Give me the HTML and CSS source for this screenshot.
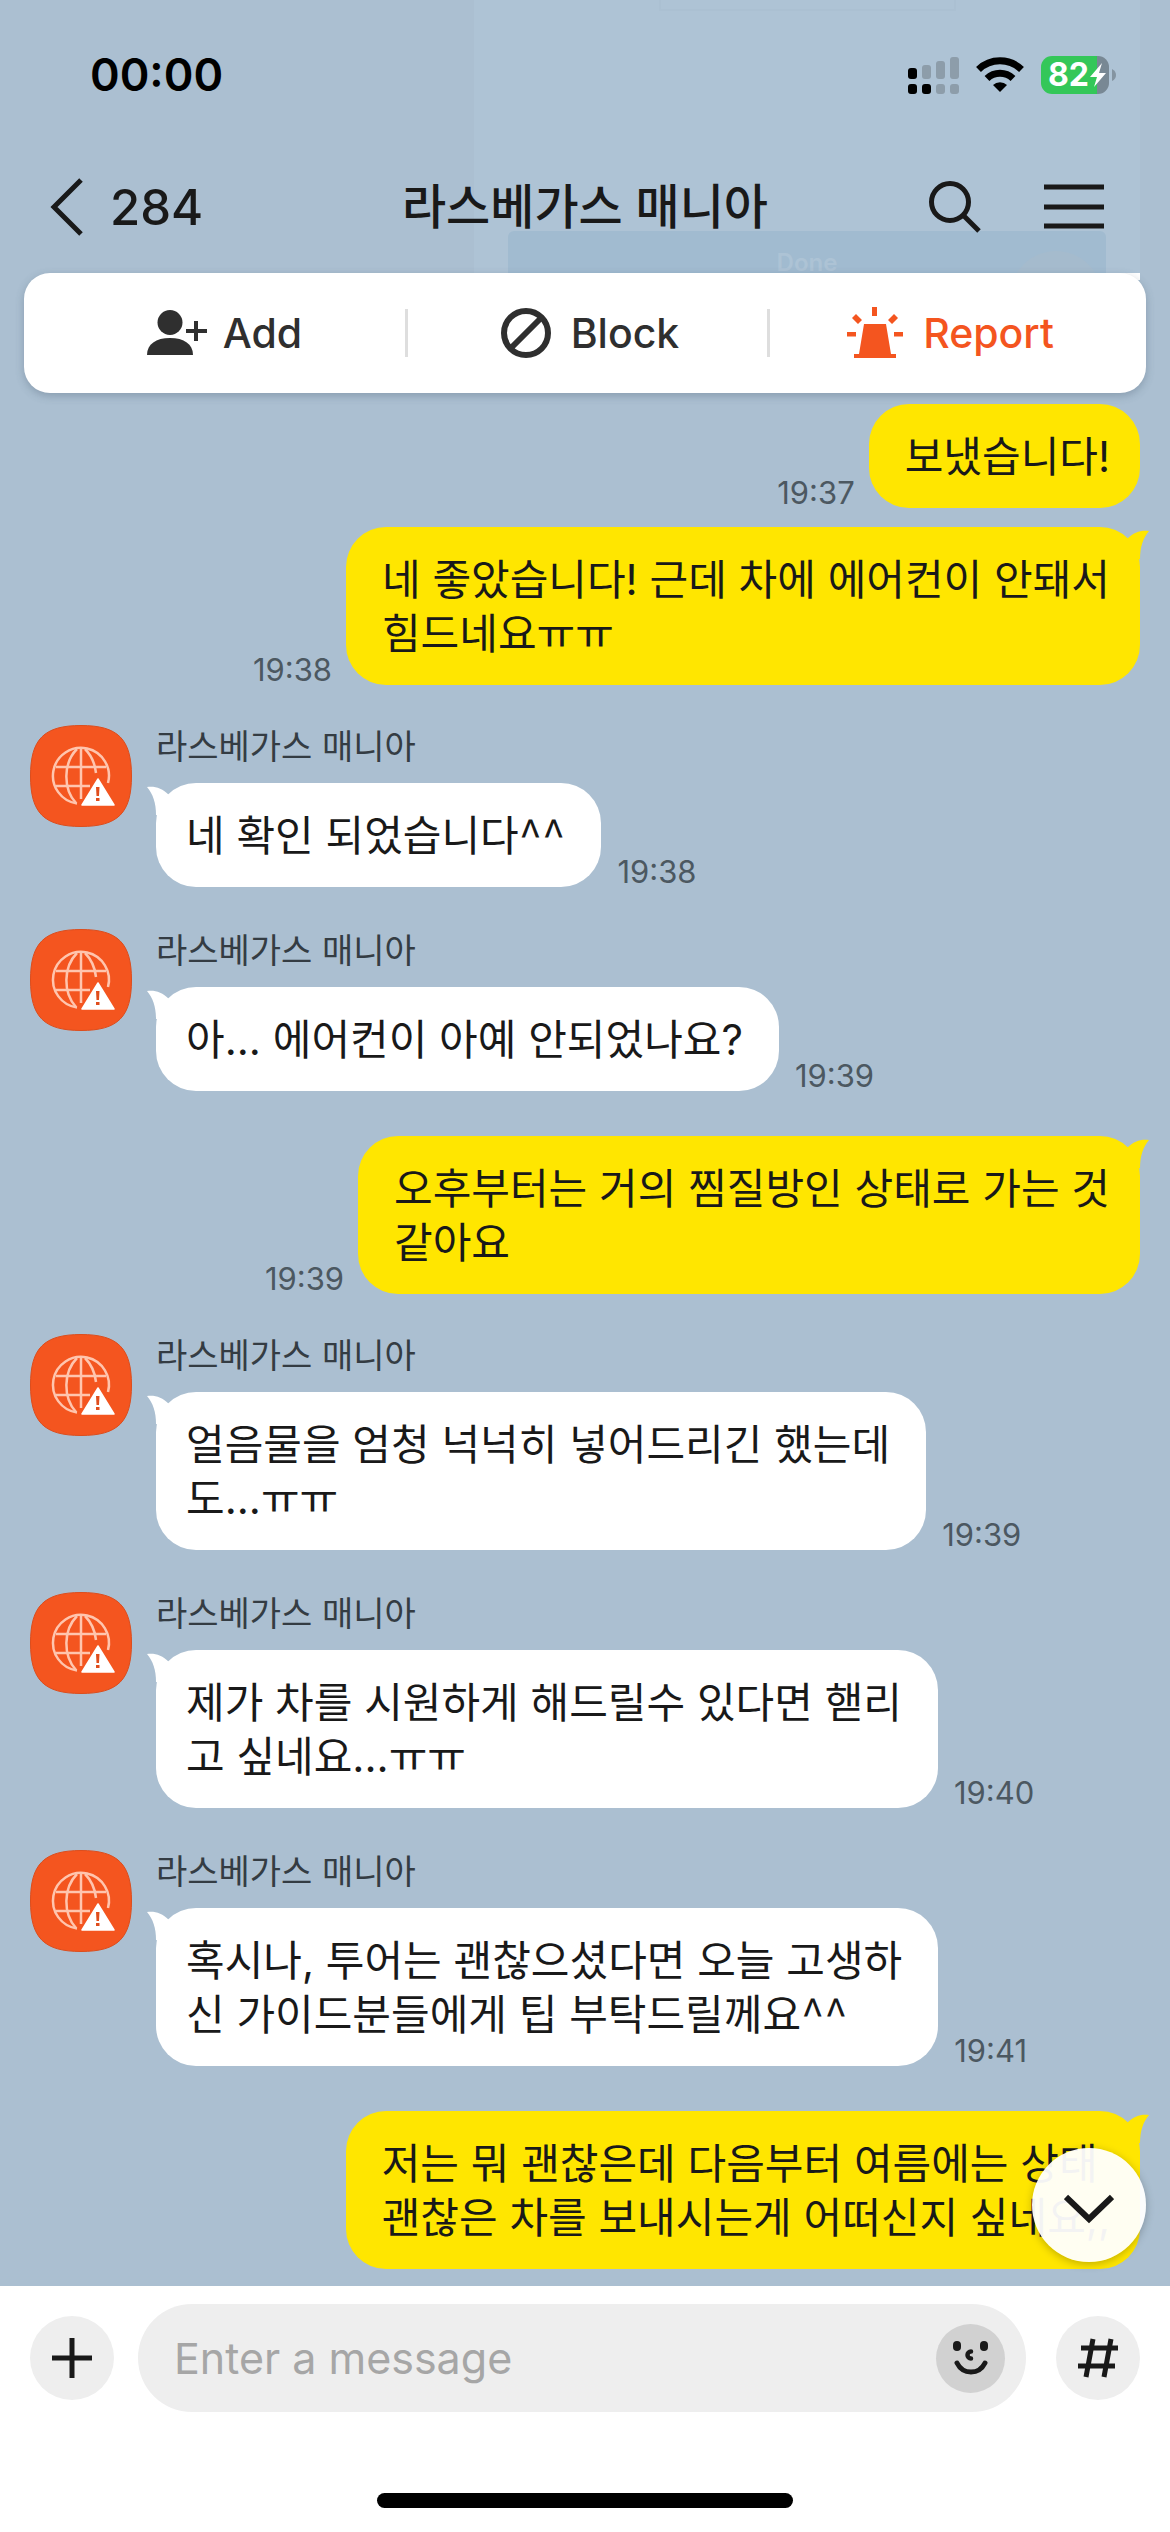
FILE: index.html
```html
<!DOCTYPE html>
<html lang="ko">
<head>
<meta charset="utf-8">
<meta name="viewport" content="width=device-width, initial-scale=1">
<title>라스베가스 매니아</title>
<link rel="stylesheet" href="styles.css">
</head>
<body>
<svg class="symbols" aria-hidden="true">
  <symbol id="tail" viewBox="0 0 24 32">
    <path d="M0 4C8 3 15 5 22 12L24 32H9C9 20 6 11 0 4Z"/>
  </symbol>
  <symbol id="avatar" viewBox="0 0 102 102">
    <path d="M51 .5C88 .5 101.500 14 101.500 51S88 101.500 51 101.500 .5 88 .5 51 14 .5 51 .5Z" fill="#f4551f" stroke="#dc4d1d"/>
    <g fill="none" stroke="#ffc5ae" stroke-width="2.500">
      <path d="M47 78.500A28 28 0 1 1 78 58"/>
      <path d="M51 23V74M26 42H76M26 61H60"/>
      <path d="M47 24C33 38 33 64 46 78M55 24C62 31 65 39 66 48"/>
    </g>
    <path d="M68 54L84 80H52Z" fill="#fff" stroke="#fff" stroke-width="1.500" stroke-linejoin="round"/>
    <path d="M66 62H69.500L69 71H66.500ZM66 73H69.500V76H66Z" fill="#e04d1c"/>
  </symbol>
</svg>

<div class="app">
  <div class="ghost" aria-hidden="true">
    <div class="ghost-field"></div>
    <div class="ghost-panel"><span class="ghost-dot"></span><span class="ghost-label">Done</span></div>
  </div>

  <div class="status">
    <span class="clock">00:00</span>
    <div class="status-icons">
      <svg class="signal" viewBox="0 0 52 38" aria-hidden="true">
        <g fill="#000"><rect y="12" width="9" height="11" rx="3"/><rect y="28" width="9" height="10" rx="3"/><rect x="14" y="28" width="9" height="10" rx="3"/></g>
        <g fill="#8d9daa"><rect x="14" y="9" width="9" height="14" rx="3"/><rect x="28" y="5" width="9" height="18" rx="3"/><rect x="42" y="1" width="9" height="22" rx="3"/><rect x="28" y="28" width="9" height="10" rx="3"/><rect x="42" y="28" width="9" height="10" rx="3"/></g>
      </svg>
      <svg class="wifi" viewBox="0 0 48 37" aria-hidden="true">
        <g fill="none" stroke="#000" stroke-width="7"><path d="M2.500 13.500A31 31 0 0 1 45.500 13.500"/><path d="M11 22.500A19 19 0 0 1 37 22.500"/></g>
        <path d="M24 36L17 29A10 10 0 0 1 31 29Z"/>
      </svg>
      <div class="battery">
        <span class="level">82</span>
        <svg class="bolt" viewBox="0 0 16 24" aria-hidden="true"><path d="M12 0L0 14H7L4 24L16 10H9Z" fill="#fff"/></svg>
      </div>
      <svg class="nub" viewBox="0 0 4 12" aria-hidden="true"><path d="M0 0Q4 2 4 6T0 12Z" fill="#8494a1"/></svg>
    </div>
  </div>

  <header class="nav">
    <button class="back" type="button" aria-label="Back">
      <svg class="chevron" viewBox="0 0 34 58" aria-hidden="true"><path d="M31 2L4 29L31 56" fill="none" stroke="#191919" stroke-width="5"/></svg>
      <span>284</span>
    </button>
    <h1 class="title">라스베가스 매니아</h1>
    <div class="tools">
      <button type="button" aria-label="Search">
        <svg class="search" viewBox="0 0 54 54" aria-hidden="true"><g fill="none" stroke="#191919" stroke-width="5"><circle cx="22" cy="22" r="18.500"/><path d="M35 35L51 51"/></g></svg>
      </button>
      <button type="button" aria-label="Menu">
        <svg class="menu" viewBox="0 0 60 46" aria-hidden="true"><path d="M0 3H60M0 23H60M0 42H60" stroke="#191919" stroke-width="5"/></svg>
      </button>
    </div>
  </header>

  <div class="actions">
    <button class="action add" type="button">
      <svg class="icon-add" viewBox="0 0 60 46" aria-hidden="true"><g fill="#2f2f2f"><ellipse cx="23" cy="12.500" rx="12.500" ry="12.500"/><path d="M0 45C0 34 9 28 23 28S46 34 46 45Z"/><path d="M47 11H51V19H60V23H51V31H47V23H39V19H47Z"/></g></svg>
      <span>Add</span>
    </button>
    <button class="action block" type="button">
      <svg class="icon-block" viewBox="0 0 50 50" aria-hidden="true"><g fill="none" stroke="#2f2f2f" stroke-width="6"><circle cx="25" cy="25" r="22"/><path d="M10 40L40 10"/></g></svg>
      <span>Block</span>
    </button>
    <button class="action report" type="button">
      <svg class="icon-report" viewBox="0 0 56 52" aria-hidden="true"><path d="M17 17H39L44 47H49V51H7V47H12ZM25 0H30V9H25ZM0 25H9V29.500H0ZM47 25H56V29.500H47ZM5 11L9 7L15 13L11 17ZM51 11L47 7L41 13L45 17Z" fill="#f4551f"/></svg>
      <span>Report</span>
    </button>
  </div>

  <main class="chat">
    <div class="msg out">
      <time>19:37</time>
      <p class="bubble">보냈습니다!</p>
    </div>
    <div class="msg out">
      <time>19:38</time>
      <p class="bubble"><svg class="tail" aria-hidden="true"><use href="#tail"/></svg>네 좋았습니다! 근데 차에 에어컨이 안돼서<br>힘드네요ㅠㅠ</p>
    </div>
    <div class="msg in">
      <svg class="avatar" aria-hidden="true"><use href="#avatar"/></svg>
      <div class="body">
        <span class="name">라스베가스 매니아</span>
        <div class="line"><p class="bubble"><svg class="tail" aria-hidden="true"><use href="#tail"/></svg>네 확인 되었습니다<span class="emote">^^</span></p><time>19:38</time></div>
      </div>
    </div>
    <div class="msg in">
      <svg class="avatar" aria-hidden="true"><use href="#avatar"/></svg>
      <div class="body">
        <span class="name">라스베가스 매니아</span>
        <div class="line"><p class="bubble"><svg class="tail" aria-hidden="true"><use href="#tail"/></svg>아... 에어컨이 아예 안되었나요?</p><time>19:39</time></div>
      </div>
    </div>
    <div class="msg out">
      <time>19:39</time>
      <p class="bubble"><svg class="tail" aria-hidden="true"><use href="#tail"/></svg>오후부터는 거의 찜질방인 상태로 가는 것<br>같아요</p>
    </div>
    <div class="msg in">
      <svg class="avatar" aria-hidden="true"><use href="#avatar"/></svg>
      <div class="body">
        <span class="name">라스베가스 매니아</span>
        <div class="line"><p class="bubble"><svg class="tail" aria-hidden="true"><use href="#tail"/></svg>얼음물을 엄청 넉넉히 넣어드리긴 했는데<br>도...ㅠㅠ</p><time>19:39</time></div>
      </div>
    </div>
    <div class="msg in">
      <svg class="avatar" aria-hidden="true"><use href="#avatar"/></svg>
      <div class="body">
        <span class="name">라스베가스 매니아</span>
        <div class="line"><p class="bubble"><svg class="tail" aria-hidden="true"><use href="#tail"/></svg>제가 차를 시원하게 해드릴수 있다면 핻리<br>고 싶네요...ㅠㅠ</p><time>19:40</time></div>
      </div>
    </div>
    <div class="msg in">
      <svg class="avatar" aria-hidden="true"><use href="#avatar"/></svg>
      <div class="body">
        <span class="name">라스베가스 매니아</span>
        <div class="line"><p class="bubble"><svg class="tail" aria-hidden="true"><use href="#tail"/></svg>혹시나, 투어는 괜찮으셨다면 오늘 고생하<br>신 가이드분들에게 팁 부탁드릴께요<span class="emote">^^</span></p><time>19:41</time></div>
      </div>
    </div>
    <div class="msg out">
      <p class="bubble"><svg class="tail" aria-hidden="true"><use href="#tail"/></svg>저는 뭐 괜찮은데 다음부터 여름에는 상태<br>괜찮은 차를 보내시는게 어떠신지 싶네요,,</p>
    </div>
    <button class="jump" type="button" aria-label="Scroll to latest">
      <svg class="down" viewBox="0 0 50 30" aria-hidden="true"><path d="M2 3L25 25L48 3" fill="none" stroke="#191919" stroke-width="6"/></svg>
    </button>
  </main>

  <footer class="composer">
    <div class="row">
      <button class="round" type="button" aria-label="Attach">
        <svg class="plus" viewBox="0 0 40 40" aria-hidden="true"><path d="M20 0V40M0 20H40" stroke="#191919" stroke-width="5"/></svg>
      </button>
      <div class="field">
        <input type="text" placeholder="Enter a message" aria-label="Enter a message">
        <button class="emoji" type="button" aria-label="Emoticons">
          <svg class="smile" viewBox="0 0 36 34" aria-hidden="true">
            <rect x="0" y="0" width="8" height="10" rx="4" fill="#191919"/><rect x="27" y="0" width="8" height="10" rx="4" fill="#191919"/>
            <g fill="none" stroke="#191919" stroke-linecap="round"><path d="M18 10.500A3.500 3.500 0 0 0 18 17.500" stroke-width="4.500"/><path d="M4 22C10 34 26 34 32 22" stroke-width="5"/></g>
          </svg>
        </button>
      </div>
      <button class="round" type="button" aria-label="Hashtag search">
        <svg class="hash" viewBox="0 0 40 40" aria-hidden="true"><path d="M15 1L8 39M33 1L26 39M3 10H40M0 28H37" fill="none" stroke="#191919" stroke-width="5"/></svg>
      </button>
    </div>
    <div class="home"></div>
  </footer>
</div>
</body>
</html>
```

FILE: styles.css
```css
* { box-sizing: border-box; }

body {
  margin: 0;
  background: #abbfd1;
  color: #191919;
  font-family: Inter, "Noto Sans CJK KR", sans-serif;
}

button {
  display: flex;
  align-items: center;
  justify-content: center;
  padding: 0;
  border: 0;
  background: none;
  color: inherit;
  font: inherit;
  cursor: pointer;
}

svg { display: block; flex: none; }
p, h1 { margin: 0; }

.symbols { position: absolute; width: 0; height: 0; }

.app {
  position: relative;
  display: flex;
  flex-direction: column;
  min-height: 100vh;
}

/* Faded sheet behind the header */
.ghost {
  position: absolute;
  top: 0;
  left: 474px;
  right: 30px;
  height: 280px;
  overflow: hidden;
  border-bottom: 7px solid #fff;
  background: #aec3d5;
}

.ghost-field {
  position: absolute;
  top: 0;
  left: 185px;
  right: 184px;
  height: 11px;
  border: 2px solid #abc0d2;
  border-top: 0;
}

.ghost-panel {
  position: absolute;
  inset: 231px 34px 0;
  border-radius: 6px 6px 0 0;
  background: #a1bbd0;
  text-align: center;
}

.ghost-label {
  display: block;
  padding-top: 20px;
  color: #adc3d5;
  font-size: 24px;
  font-weight: 600;
  line-height: 24px;
}

.ghost-dot {
  position: absolute;
  top: 20px;
  right: 4px;
  width: 92px;
  height: 92px;
  border-radius: 50%;
  background: #a5bbcd;
}

.status, .nav, .actions, .chat, .composer { position: relative; }

.status {
  display: flex;
  align-items: center;
  justify-content: space-between;
  height: 149px;
  padding: 0 54px 0 90px;
  color: #000;
}

.clock { font-size: 45px; font-weight: 600; }
.status-icons { display: flex; align-items: center; }
.signal { width: 52px; height: 38px; }
.wifi { width: 48px; height: 37px; margin: 0 17px 0 16px; }

.battery {
  display: flex;
  align-items: center;
  width: 68px;
  height: 38px;
  padding-left: 7px;
  border-radius: 11px;
  background: linear-gradient(90deg, #34c759 82%, #788894 82%);
  color: #fff;
}

.level { font-size: 32px; font-weight: 700; line-height: 38px; }
.bolt { width: 16px; height: 24px; margin-left: 1px; }
.nub { width: 4px; height: 12px; margin-left: 3px; }

.nav {
  display: grid;
  grid-template-columns: 1fr auto 1fr;
  align-items: center;
  height: 116px;
  padding: 0 50px;
}

.back {
  justify-self: start;
  gap: 26px;
  font-size: 49px;
  font-weight: 500;
}

.chevron { width: 34px; height: 58px; }
.title { font-size: 48px; font-weight: 500; line-height: 60px; }

.tools {
  display: flex;
  align-items: center;
  justify-content: flex-end;
  gap: 62px;
  padding-right: 16px;
}

.search { width: 54px; height: 54px; }
.menu { width: 60px; height: 46px; }

.actions {
  display: grid;
  grid-template-columns: 381fr 362fr 379fr;
  height: 120px;
  margin: 8px 24px 0;
  border-radius: 26px;
  background: #fff;
  box-shadow: 0 3px 8px rgba(60, 80, 100, .3);
}

.action {
  position: relative;
  gap: 20px;
  color: #2f2f2f;
  font-size: 41px;
  font-weight: 500;
}

.action + .action::before {
  content: "";
  position: absolute;
  left: 0;
  top: 36px;
  width: 3px;
  height: 48px;
  background: #dedede;
}

.add { gap: 16px; padding-left: 20px; }
.block { padding-left: 8px; }
.report { padding-right: 12px; color: #f4551f; }
.icon-add { width: 60px; height: 46px; }
.icon-block { width: 50px; height: 50px; }
.icon-report { width: 56px; height: 52px; }

.chat {
  flex: 1;
  padding: 11px 30px 17px;
}

.msg { display: flex; }
.out { align-items: flex-end; justify-content: flex-end; gap: 14px; }
.out + .out { margin-top: 19px; }
.out + .in { margin-top: 40px; }
.in + .in { margin-top: 42px; }
.in + .out { margin-top: 45px; }
.in { gap: 24px; }

.avatar { width: 102px; height: 102px; }

.name {
  display: block;
  height: 58px;
  color: #343c43;
  font-size: 34px;
  line-height: 44px;
}

.line { display: flex; align-items: flex-end; gap: 16px; }

.bubble {
  position: relative;
  padding: 26px 36px 24px 30px;
  border-radius: 40px;
  background: #fff;
  font-size: 42px;
  line-height: 54px;
}

.out .bubble {
  padding: 26px 30px 24px 36px;
  background: #ffe600;
}

.emote {
  font-family: "Noto Sans CJK KR", sans-serif;
  line-height: 1;
}

.tail {
  position: absolute;
  top: 0;
  left: -9px;
  width: 24px;
  height: 32px;
  fill: #fff;
}

.out .tail {
  left: auto;
  right: -9px;
  fill: #ffe600;
  transform: scaleX(-1);
}

time {
  color: #4c5861;
  font-size: 31px;
  line-height: 30px;
}

.jump {
  position: absolute;
  right: 24px;
  bottom: 24px;
  width: 114px;
  height: 114px;
  border-radius: 50%;
  background: rgba(255, 255, 255, .95);
  box-shadow: 0 2px 8px rgba(0, 0, 0, .25);
}

.down { width: 50px; height: 30px; margin-top: 8px; }

.composer {
  padding: 18px 30px 24px;
  background: #fff;
}

.row { display: flex; align-items: center; }

.round {
  flex: none;
  width: 84px;
  height: 84px;
  border-radius: 50%;
  background: #eee;
}

.plus, .hash { width: 40px; height: 40px; }

.field {
  display: flex;
  flex: 1;
  align-items: center;
  height: 108px;
  margin: 0 30px 0 24px;
  padding: 0 21px 0 36px;
  border-radius: 54px;
  background: #eee;
}

.field input {
  flex: 1;
  min-width: 0;
  padding: 0;
  border: 0;
  outline: 0;
  background: none;
  color: #191919;
  font: 400 43px Inter, "Noto Sans CJK KR", sans-serif;
}

.field input::placeholder { color: #a6a6a6; opacity: 1; }

.emoji {
  flex: none;
  width: 69px;
  height: 69px;
  border-radius: 50%;
  background: #d1d1d1;
}

.smile { width: 36px; height: 34px; }

.home {
  width: 416px;
  height: 15px;
  margin: 81px auto 0;
  border-radius: 8px;
  background: #000;
}
```
